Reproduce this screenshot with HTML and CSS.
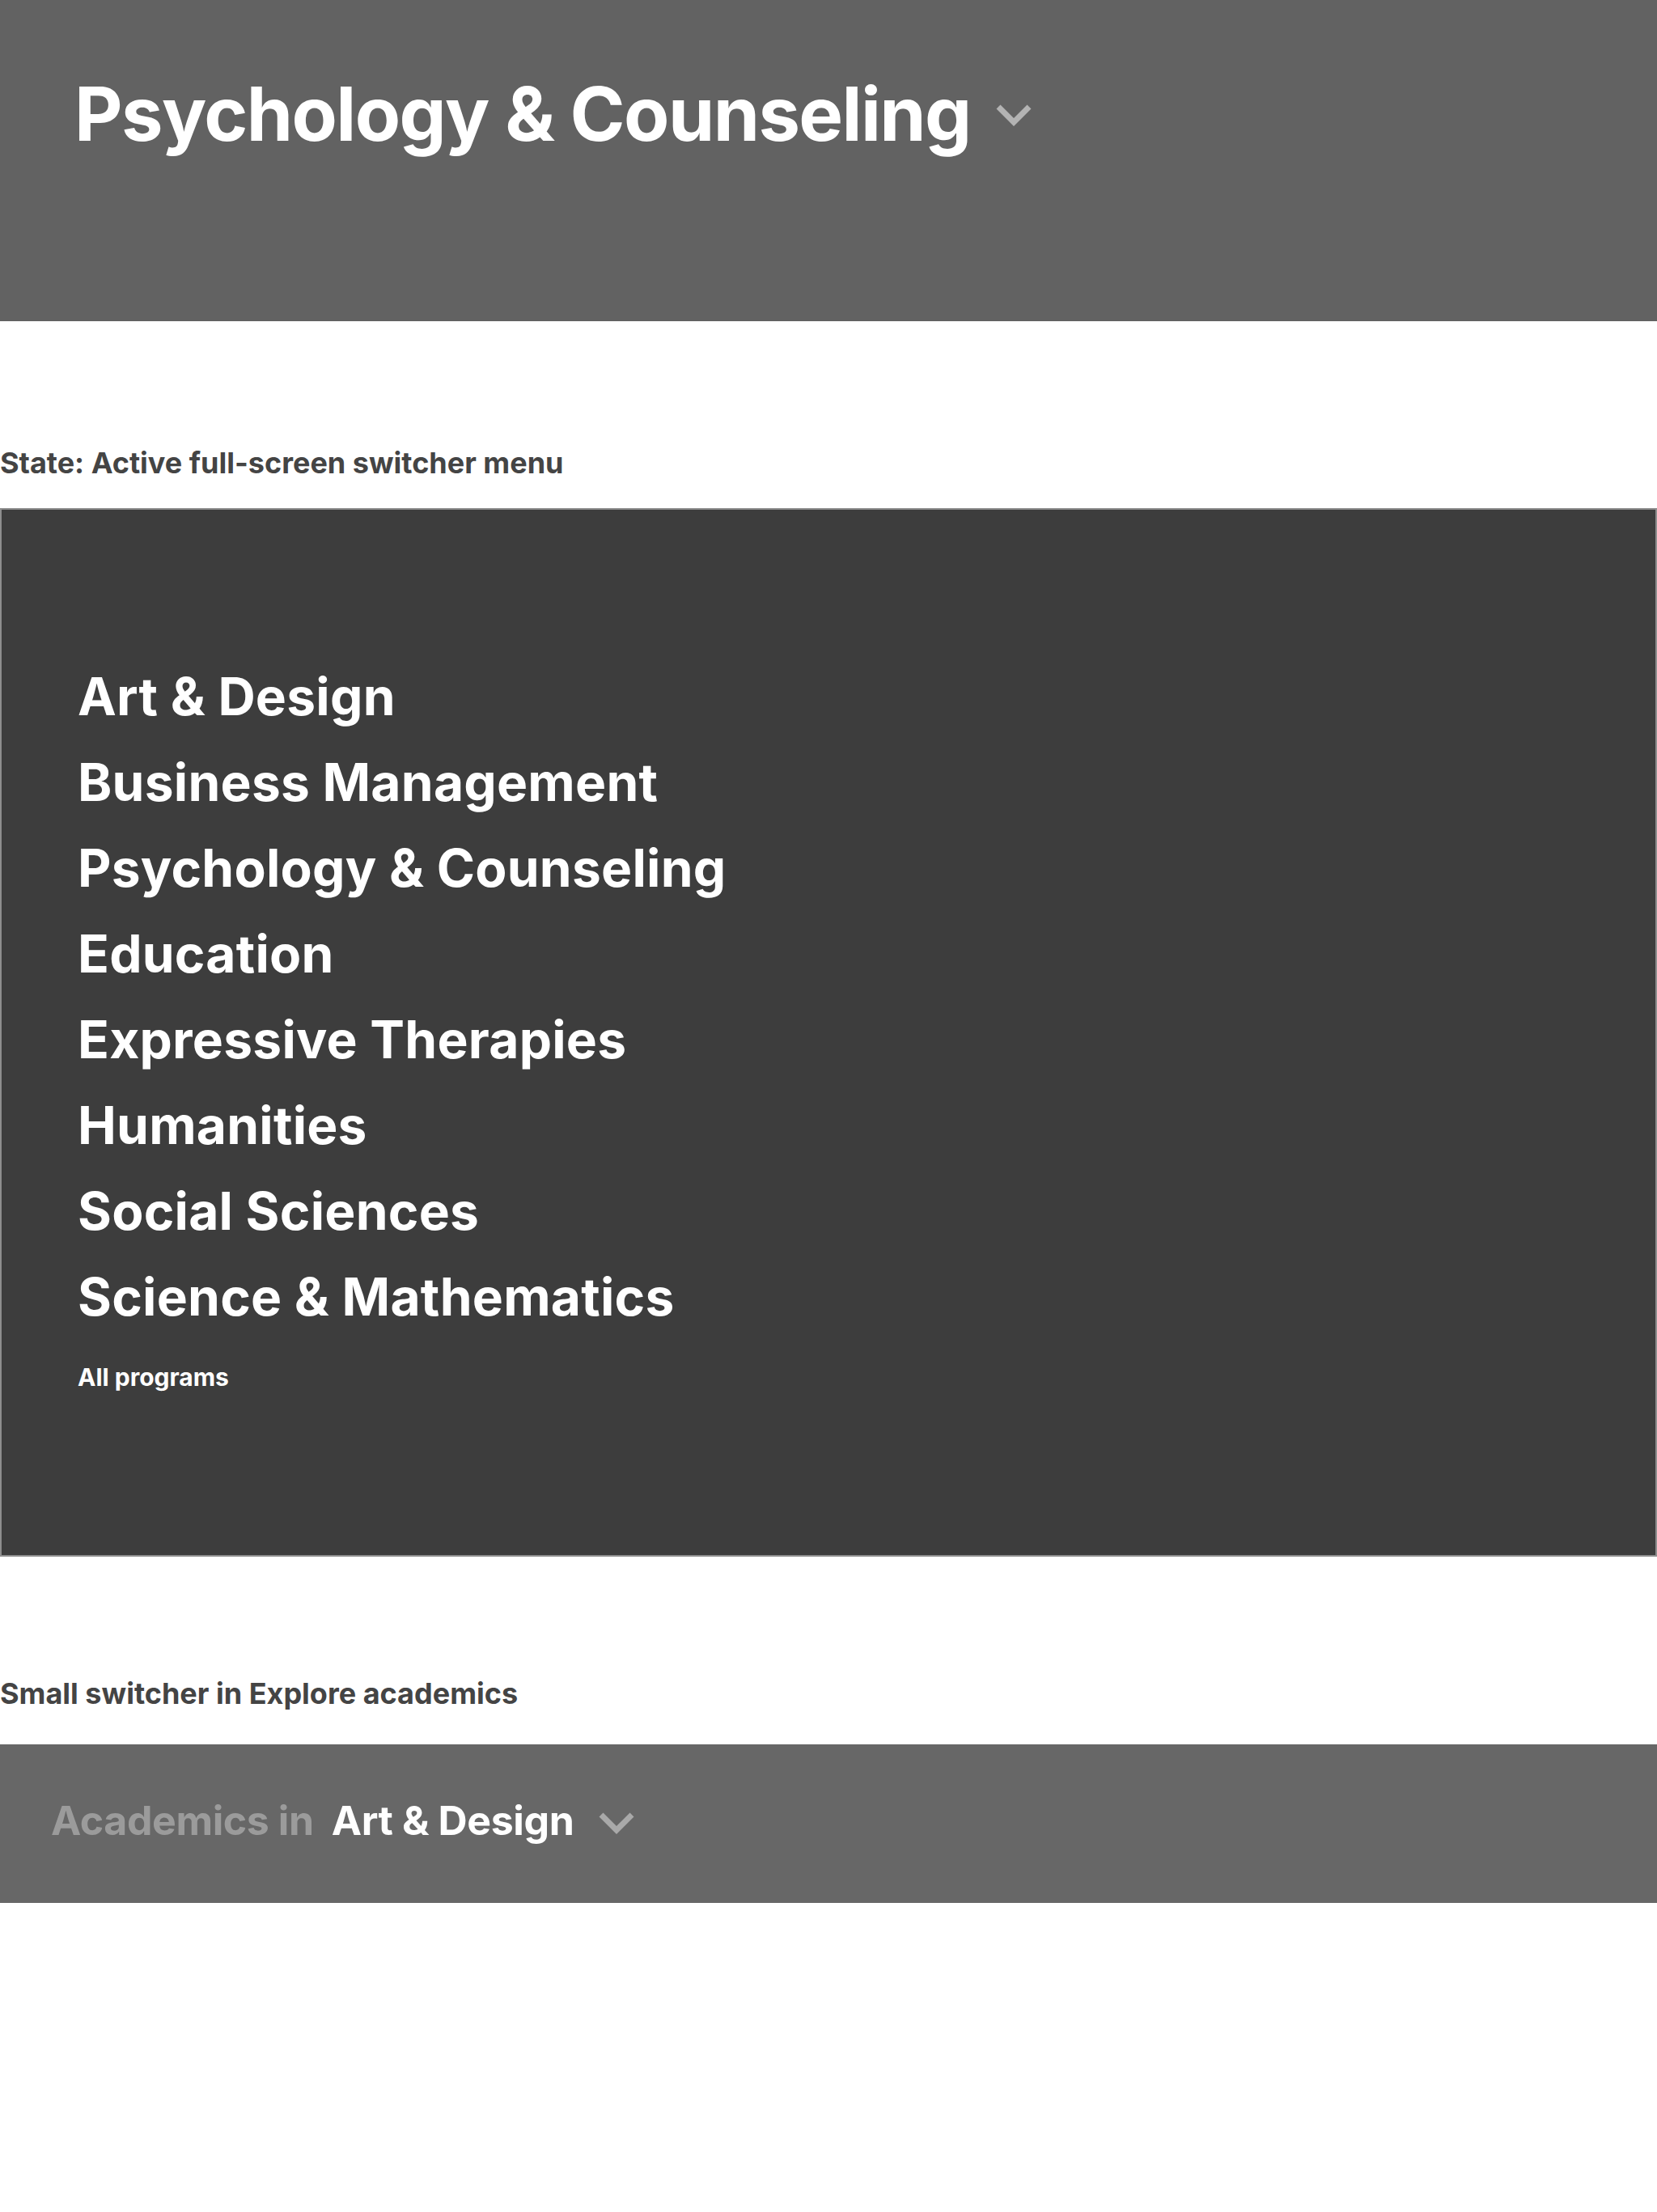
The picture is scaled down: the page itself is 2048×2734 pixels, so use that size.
FILE: index.html
```html
<!DOCTYPE html>
<html lang="en">
<head>
<meta charset="utf-8">
<title>Program switcher</title>
<link rel="stylesheet" href="styles.css">
</head>
<body>
  <header class="hero">
    <h1 class="hero-title">
      <span>Psychology &amp; Counseling</span>
      <svg class="chev chev-hero" viewBox="0 0 44 27" aria-hidden="true"><polyline points="3,3 22,22 41,3"/></svg>
    </h1>
  </header>

  <p class="state-label label-first">State: Active full-screen switcher menu</p>

  <nav class="switcher-menu">
    <ul class="menu-list">
      <li><a href="#">Art &amp; Design</a></li>
      <li><a href="#">Business Management</a></li>
      <li><a href="#">Psychology &amp; Counseling</a></li>
      <li><a href="#">Education</a></li>
      <li><a href="#">Expressive Therapies</a></li>
      <li><a href="#">Humanities</a></li>
      <li><a href="#">Social Sciences</a></li>
      <li><a href="#">Science &amp; Mathematics</a></li>
    </ul>
    <a class="all-programs" href="#">All programs</a>
  </nav>

  <p class="state-label label-second">Small switcher in Explore academics</p>

  <div class="small-switcher">
    <span class="small-prefix">Academics in</span>
    <span class="small-current">Art &amp; Design</span>
    <svg class="chev chev-small" viewBox="0 0 44 27" aria-hidden="true"><polyline points="3,3 22,22 41,3"/></svg>
  </div>
</body>
</html>
```

FILE: styles.css
```css
html, body {
  margin: 0;
  padding: 0;
  background: #ffffff;
}

body {
  font-family: Inter, "Noto Sans", "Liberation Sans", sans-serif;
  width: 2048px;
  min-height: 2734px;
}

a {
  color: inherit;
  text-decoration: none;
}

.hero {
  background: #626262;
  height: 397px;
  box-sizing: border-box;
  padding: 95px 0 0 92px;
}

.hero-title {
  margin: 0;
  display: flex;
  align-items: center;
  gap: 31px;
  font-size: 92px;
  line-height: 92px;
  font-weight: 700;
  letter-spacing: -0.017em;
  color: #ffffff;
}

.chev {
  fill: none;
  stroke-width: 7;
  stroke-linecap: butt;
  stroke-linejoin: miter;
}

.chev-hero {
  width: 44px;
  height: 27px;
  stroke: #b3b3b3;
  margin-top: 2px;
}

.state-label {
  margin: 0;
  font-size: 36px;
  line-height: 40px;
  font-weight: 700;
  color: #444444;
}

.label-first {
  margin-top: 155px;
  margin-bottom: 36px;
}

.switcher-menu {
  background: #3d3d3d;
  border: 2px solid #8e8e8e;
  height: 1296px;
  box-sizing: border-box;
  padding: 178px 0 0 94px;
}

.menu-list {
  list-style: none;
  margin: 0;
  padding: 0;
}

.menu-list li {
  font-size: 64px;
  line-height: 106px;
  font-weight: 700;
  letter-spacing: 0.004em;
  color: #ffffff;
}

.all-programs {
  display: block;
  margin-top: 26px;
  font-size: 30px;
  line-height: 40px;
  font-weight: 700;
  color: #ffffff;
}

.label-second {
  margin-top: 149px;
  margin-bottom: 43px;
}

.small-switcher {
  background: #676767;
  height: 196px;
  box-sizing: border-box;
  padding: 64px 0 0 63px;
  display: flex;
  align-items: flex-start;
  font-size: 50px;
  line-height: 60px;
  font-weight: 700;
  letter-spacing: -0.008em;
}

.small-prefix {
  color: #9b9b9b;
  margin-right: 22px;
}

.small-current {
  color: #ffffff;
  margin-right: 31px;
}

.chev-small {
  width: 44px;
  height: 27px;
  stroke: #a9a9a9;
  margin-top: 20px;
}
```
